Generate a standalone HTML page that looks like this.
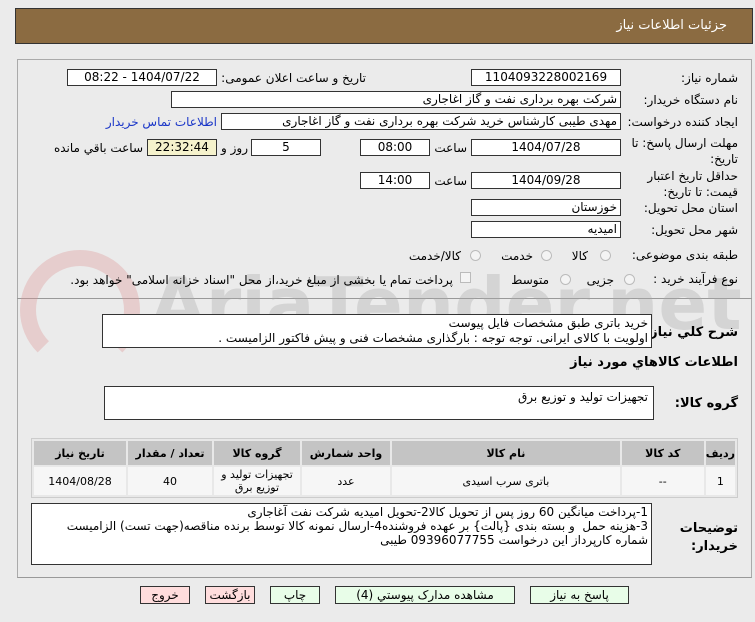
<!DOCTYPE html>
<html><head><meta charset="utf-8"><style>
*{box-sizing:border-box;margin:0;padding:0}
body{width:755px;height:622px;background:#ebebeb;font-family:"DejaVu Sans",sans-serif;font-size:12px;color:#000;position:relative;overflow:hidden;direction:rtl}
.a{position:absolute;white-space:nowrap}
.hd{left:15px;top:8px;width:738px;height:36px;background:#8b6b41;border:1px solid #333;color:#fff;font-size:13px}
.box{position:absolute;background:#fff;border:1px solid #333;height:17px;line-height:15px;padding:0 3px;white-space:nowrap;overflow:hidden}
.c{text-align:center}
.lb{position:absolute;white-space:nowrap;text-align:right}
.rad{position:absolute;width:11px;height:11px;border-radius:50%;border:1px solid #bbb;background:#f4f4f4}
table{border-collapse:separate;border-spacing:2px;position:absolute;left:31px;top:438px;width:707px;border:1px solid #ccc;background:#e8e8e8}
th{background:#c4c4c4;height:24px;font-weight:bold;font-size:11px}
td{background:#f6f6f6;height:28px;text-align:center;font-size:11px;line-height:13px}
.btn{position:absolute;top:586px;height:18px;border:1px solid #333;text-align:center;line-height:16px;font-size:12px}
</style></head><body>
<div class="a hd"><span style="position:absolute;right:25px;top:9px">جزئیات اطلاعات نیاز</span></div>
<div class="a" style="left:17px;top:59px;width:735px;height:519px;border:1px solid #aaa;border-bottom-color:#999"></div>
<div class="a" style="left:17px;top:298px;width:735px;border-top:1px solid #999"></div>
<!-- watermark -->
<div class="a" style="left:20px;top:250px;width:120px;height:120px;border:16px solid rgba(220,150,150,.35);border-radius:50%;border-bottom-color:transparent"></div>
<div class="a" style="left:150px;top:262px;font-size:72px;font-weight:bold;color:rgba(170,170,170,.35);direction:ltr">AriaTender.net</div>

<div class="lb" style="right:17px;top:71px">شماره نیاز:</div>
<div class="box c" style="left:471px;top:69px;width:150px">1104093228002169</div>
<div class="lb" style="right:389px;top:71px">تاریخ و ساعت اعلان عمومی:</div>
<div class="box c" style="left:67px;top:69px;width:150px">1404/07/22 - 08:22</div>

<div class="lb" style="right:17px;top:93px">نام دستگاه خریدار:</div>
<div class="box" style="left:171px;top:91px;width:450px">شرکت بهره برداری نفت و گاز اغاجاری</div>

<div class="lb" style="right:17px;top:115px">ایجاد کننده درخواست:</div>
<div class="box" style="left:221px;top:113px;width:400px">مهدی طیبی کارشناس خرید شرکت بهره برداری نفت و گاز اغاجاری</div>
<div class="lb" style="right:538px;top:115px;color:#1a36c8">اطلاعات تماس خریدار</div>

<div class="lb" style="right:17px;top:135px;line-height:16px">مهلت ارسال پاسخ: تا<br>تاریخ:</div>
<div class="box c" style="left:471px;top:139px;width:150px">1404/07/28</div>
<div class="lb" style="right:288px;top:141px">ساعت</div>
<div class="box c" style="left:360px;top:139px;width:70px">08:00</div>
<div class="box c" style="left:251px;top:139px;width:70px">5</div>
<div class="lb" style="right:507px;top:141px">روز و</div>
<div class="box c" style="left:147px;top:139px;width:70px;background:#f5f2cc">22:32:44</div>
<div class="lb" style="right:612px;top:141px">ساعت باقي مانده</div>

<div class="lb" style="right:17px;top:168px;line-height:16px">حداقل تاریخ اعتبار<br>قیمت: تا تاریخ:</div>
<div class="box c" style="left:471px;top:172px;width:150px">1404/09/28</div>
<div class="lb" style="right:288px;top:174px">ساعت</div>
<div class="box c" style="left:360px;top:172px;width:70px">14:00</div>

<div class="lb" style="right:17px;top:201px">استان محل تحویل:</div>
<div class="box" style="left:471px;top:199px;width:150px">خوزستان</div>
<div class="lb" style="right:17px;top:223px">شهر محل تحویل:</div>
<div class="box" style="left:471px;top:221px;width:150px">امیدیه</div>

<div class="lb" style="right:17px;top:248px">طبقه بندی موضوعی:</div>
<div class="rad" style="left:600px;top:250px"></div><div class="lb" style="right:167px;top:249px">کالا</div>
<div class="rad" style="left:541px;top:250px"></div><div class="lb" style="right:222px;top:249px">خدمت</div>
<div class="rad" style="left:470px;top:250px"></div><div class="lb" style="right:294px;top:249px">کالا/خدمت</div>

<div class="lb" style="right:17px;top:272px">نوع فرآیند خرید :</div>
<div class="rad" style="left:624px;top:274px"></div><div class="lb" style="right:141px;top:273px">جزیی</div>
<div class="rad" style="left:560px;top:274px"></div><div class="lb" style="right:206px;top:273px">متوسط</div>
<div class="a" style="left:460px;top:272px;width:11px;height:11px;border:1px solid #bbb;background:#f4f4f4"></div>
<div class="lb" style="right:302px;top:273px">پرداخت تمام یا بخشی از مبلغ خرید،از محل "اسناد خزانه اسلامی" خواهد بود.</div>

<div class="lb" style="right:17px;top:325px;font-weight:bold;font-size:13px">شرح کلي نیاز:</div>
<div class="a" style="left:102px;top:314px;width:550px;height:34px;background:#fff;border:1px solid #333;padding:1px 3px;line-height:15px;white-space:normal">خرید باتری طبق مشخصات فایل پیوست<br>اولویت با کالای ایرانی. توجه توجه : بارگذاری مشخصات فنی و پیش فاکتور الزامیست .</div>
<div class="lb" style="right:17px;top:355px;font-weight:bold;font-size:13px">اطلاعات کالاهاي مورد نیاز</div>
<div class="lb" style="right:17px;top:396px;font-weight:bold;font-size:13px">گروه کالا:</div>
<div class="a" style="left:104px;top:386px;width:550px;height:34px;background:#fff;border:1px solid #333;padding:3px 5px">تجهیزات تولید و توزیع برق</div>

<table>
<tr><th style="width:28px">ردیف</th><th style="width:82px">کد کالا</th><th>نام کالا</th><th style="width:88px">واحد شمارش</th><th style="width:86px">گروه کالا</th><th style="width:84px">تعداد / مقدار</th><th style="width:92px">تاریخ نیاز</th></tr>
<tr><td>1</td><td>--</td><td>باتری سرب اسیدی</td><td>عدد</td><td>تجهیزات تولید و<br>توزیع برق</td><td>40</td><td>1404/08/28</td></tr>
</table>

<div class="lb" style="right:17px;top:520px;font-weight:bold;font-size:13px;line-height:18px">توضیحات<br>خریدار:</div>
<div class="a" style="left:31px;top:503px;width:621px;height:62px;background:#fff;border:1px solid #333;padding:1px 3px;line-height:14px;white-space:normal">1-پرداخت میانگین 60 روز پس از تحویل کالا2-تحویل امیدیه شرکت نفت آغاجاری<br>3-هزینه حمل &nbsp;و بسته بندی {پالت} بر عهده فروشنده4-ارسال نمونه کالا توسط برنده مناقصه(جهت تست) الزامیست<br>شماره کارپرداز این درخواست 09396077755 طیبی</div>

<div class="btn" style="left:140px;width:50px;background:#fdd">خروج</div>
<div class="btn" style="left:205px;width:50px;background:#fdd">بازگشت</div>
<div class="btn" style="left:270px;width:50px;background:#e8fde8">چاپ</div>
<div class="btn" style="left:335px;width:180px;background:#e8fde8">مشاهده مدارک پیوستي (4)</div>
<div class="btn" style="left:530px;width:99px;background:#e8fde8">پاسخ به نیاز</div>
</body></html>
